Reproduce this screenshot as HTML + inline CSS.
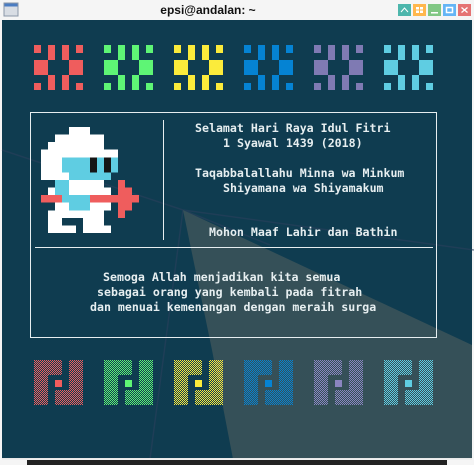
<!DOCTYPE html>
<html><head><meta charset="utf-8"><style>
html,body{margin:0;padding:0;width:474px;height:465px;overflow:hidden;background:#f5f5f5;font-family:"Liberation Sans",sans-serif}
.t{position:absolute;font-family:"DejaVu Sans Mono","Liberation Mono",monospace;font-weight:bold;font-size:11.6px;color:#e6eef0;white-space:pre;line-height:15px}
</style></head><body>
<svg width="474" height="465" style="position:absolute;left:0;top:0" xmlns="http://www.w3.org/2000/svg">
<defs>
<pattern id="ck" width="2" height="2" patternUnits="userSpaceOnUse"><rect width="2" height="2" fill="#000"/><rect width="1" height="1" fill="#fff"/><rect x="1" y="1" width="1" height="1" fill="#fff"/></pattern>
<mask id="m" maskUnits="userSpaceOnUse" x="0" y="0" width="474" height="465"><rect width="474" height="465" fill="url(#ck)"/></mask>
<symbol id="top"><rect x="0" y="0" width="7" height="8"/><rect x="14" y="0" width="7" height="15"/><rect x="28" y="0" width="7" height="15"/><rect x="42" y="0" width="7" height="8"/><rect x="0" y="15" width="14" height="15"/><rect x="35" y="15" width="14" height="15"/><rect x="14" y="30" width="7" height="15"/><rect x="28" y="30" width="7" height="15"/><rect x="0" y="38" width="7" height="7"/><rect x="42" y="38" width="7" height="7"/></symbol>
<symbol id="bot"><path d="M0 0H28V15H14V45H0Z M35 0H49V45H21V30H35Z"/></symbol>
</defs>
<rect x="0" y="0" width="474" height="20" fill="#f5f5f5"/>
<rect x="4" y="3" width="14" height="13" fill="#d8dde4" stroke="#8a96a8" stroke-width="1"/>
<rect x="4.5" y="3.5" width="13" height="3" fill="#4a7cc2"/>
<text x="208" y="14" text-anchor="middle" font-family="Liberation Sans" font-weight="bold" font-size="12" fill="#111">epsi@andalan: ~</text>
<rect x="398" y="4" width="13" height="12" fill="#4db6ac"/><path d="M401 12l3.5-4 3.5 4" stroke="#fff" fill="none"/>
<rect x="413" y="4" width="13" height="12" fill="#ffb74d"/><rect x="416" y="7" width="3" height="2.5" fill="#fff"/><rect x="420" y="7" width="3" height="2.5" fill="#fff"/><rect x="416" y="10.5" width="3" height="2.5" fill="#fff"/><rect x="420" y="10.5" width="3" height="2.5" fill="#fff"/>
<rect x="428" y="4" width="13" height="12" fill="#81c784"/><rect x="431" y="12" width="7" height="1.5" fill="#fff"/>
<rect x="443" y="4" width="13" height="12" fill="#64b5f6"/><rect x="446.5" y="7.5" width="6" height="5" stroke="#fff" stroke-width="1.5" fill="none"/>
<rect x="458" y="4" width="13" height="12" fill="#e57373"/><path d="M461.5 7.5l6 5M467.5 7.5l-6 5" stroke="#fff" stroke-width="1.3"/>
<rect x="2" y="20" width="470" height="439" fill="#0f3c50"/>
<path d="M2 150L183 210M183 210L474 250M183 210L150 459M183 210L270 245" stroke="#2a3f5c" stroke-width="1.5" fill="none" opacity="0.6"/>
<path d="M183 210L212 350L233 459H472V345Z" fill="#355058"/>
<rect x="2" y="458" width="470" height="1.5" fill="#e8e8e8"/>
<rect x="27" y="460" width="420" height="5" fill="#222"/>
<use href="#top" x="34" y="45" fill="#ef5d5d"/>
<use href="#top" x="104" y="45" fill="#5ef575"/>
<use href="#top" x="174" y="45" fill="#fbeb3b"/>
<use href="#top" x="244" y="45" fill="#0583d3"/>
<use href="#top" x="314" y="45" fill="#7f7ab3"/>
<use href="#top" x="384" y="45" fill="#5fcde2"/>
<g mask="url(#m)">
<use href="#bot" x="34" y="360" fill="#ef5d5d"/>
<use href="#bot" x="104" y="360" fill="#5ef575"/>
<use href="#bot" x="174" y="360" fill="#fbeb3b"/>
<use href="#bot" x="244" y="360" fill="#0583d3"/>
<use href="#bot" x="314" y="360" fill="#8a85c0"/>
<use href="#bot" x="384" y="360" fill="#5fcde2"/>
</g>
<rect x="55" y="380" width="7" height="7" fill="#ef5d5d"/>
<rect x="125" y="380" width="7" height="7" fill="#5ef575"/>
<rect x="195" y="380" width="7" height="7" fill="#fbeb3b"/>
<rect x="265" y="380" width="7" height="7" fill="#0583d3"/>
<rect x="335" y="380" width="7" height="7" fill="#8a85c0"/>
<rect x="405" y="380" width="7" height="7" fill="#5fcde2"/>
<rect x="30.5" y="112.5" width="406" height="225" fill="none" stroke="#e6eef0" stroke-width="1"/>
<line x1="163.5" y1="120" x2="163.5" y2="240" stroke="#e6eef0"/>
<line x1="35" y1="247.5" x2="433" y2="247.5" stroke="#e6eef0"/>
<g transform="translate(41,127) scale(7,7.57)" shape-rendering="crispEdges">
<g fill="#fff">
<rect x="4" y="0" width="3" height="1"/><rect x="2" y="1" width="7" height="1"/><rect x="1" y="2" width="8" height="1"/><rect x="0" y="3" width="11" height="1"/>
<rect x="0" y="4" width="3" height="2"/><rect x="0" y="6" width="4" height="1"/><rect x="4" y="7" width="5" height="1"/>
<rect x="1" y="8" width="1" height="1"/><rect x="4" y="8" width="6" height="1"/><rect x="2" y="10" width="2" height="1"/><rect x="7" y="10" width="3" height="1"/>
<rect x="1" y="11" width="8" height="1"/><rect x="1" y="12" width="2" height="1"/><rect x="6" y="12" width="3" height="1"/><rect x="1" y="13" width="4" height="1"/><rect x="6" y="13" width="4" height="1"/>
</g>
<g fill="#5fcde2">
<rect x="3" y="4" width="8" height="2"/><rect x="4" y="6" width="6" height="1"/><rect x="2" y="7" width="2" height="2"/><rect x="3" y="9" width="4" height="1"/><rect x="4" y="10" width="3" height="1"/>
</g>
<g fill="#151515"><rect x="7" y="4" width="1" height="2"/><rect x="9" y="4" width="1" height="2"/></g>
<g fill="#ef5d5d">
<rect x="11" y="7" width="1" height="1"/><rect x="11" y="8" width="2" height="1"/><rect x="0" y="9" width="3" height="1"/><rect x="7" y="9" width="7" height="1"/><rect x="11" y="10" width="2" height="1"/><rect x="11" y="11" width="1" height="1"/>
</g>
</g>
</svg>
<div class="t" style="left:195px;top:121px">Selamat Hari Raya Idul Fitri</div>
<div class="t" style="left:223px;top:136px">1 Syawal 1439 (2018)</div>
<div class="t" style="left:195px;top:166px">Taqabbalallahu Minna wa Minkum</div>
<div class="t" style="left:223px;top:181px">Shiyamana wa Shiyamakum</div>
<div class="t" style="left:209px;top:225px">Mohon Maaf Lahir dan Bathin</div>
<div class="t" style="left:103px;top:270px">Semoga Allah menjadikan kita semua</div>
<div class="t" style="left:97px;top:285px">sebagai orang yang kembali pada fitrah</div>
<div class="t" style="left:90px;top:300px">dan menuai kemenangan dengan meraih surga</div>
</body></html>
